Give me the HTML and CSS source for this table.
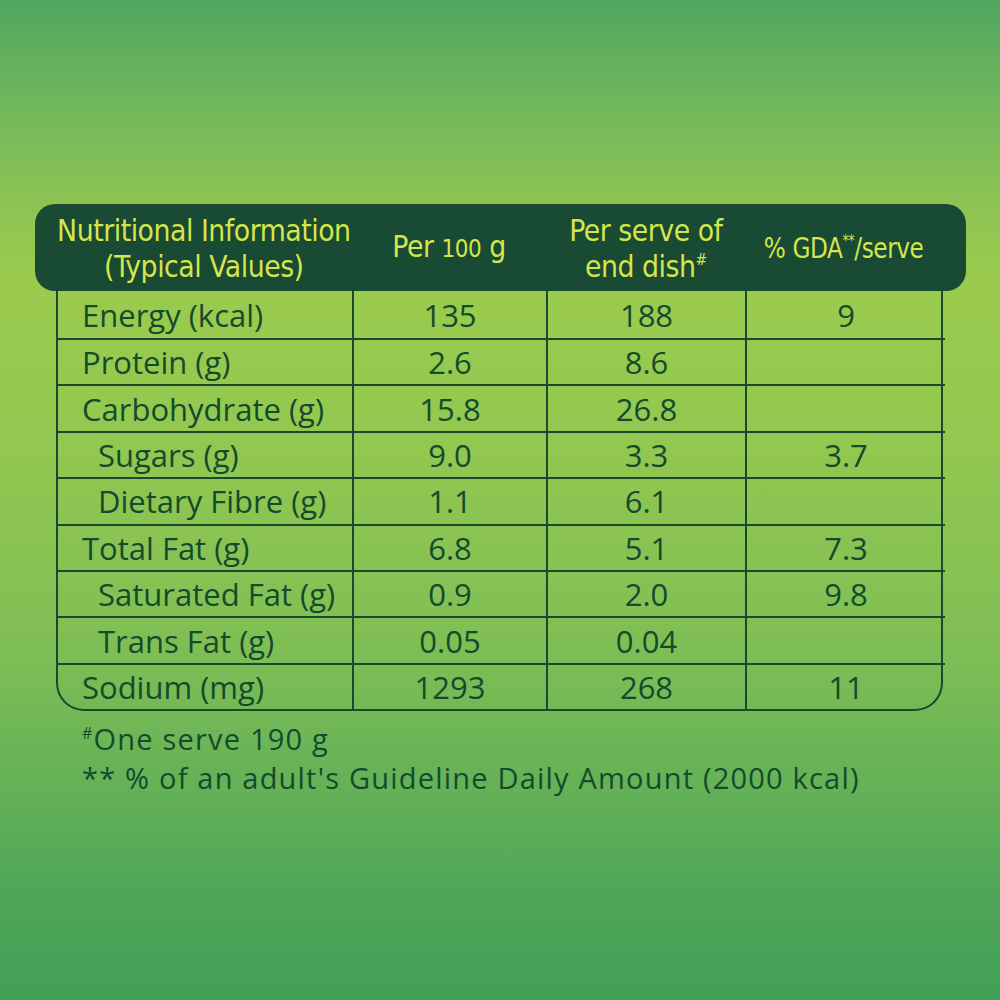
FILE: index.html
```html
<!DOCTYPE html>
<html lang="en">
<head>
<meta charset="utf-8">
<title>Nutritional Information</title>
<link rel="stylesheet" href="styles.css">
</head>
<body>
<main class="page">
  <section class="panel">
    <div class="head">
      <div class="hcell hcell-first"><span class="htext">Nutritional Information<br>(Typical Values)</span></div>
      <div class="hcell"><span class="htext">Per <span class="osf">100</span> g</span></div>
      <div class="hcell"><span class="htext">Per serve of<br>end dish<sup>#</sup></span></div>
      <div class="hcell hcell-last"><span class="htext small">% GDA<sup>**</sup>/serve</span></div>
    </div>
    <div class="body">
      <div class="cell label">Energy (kcal)</div><div class="cell">135</div><div class="cell">188</div><div class="cell">9</div>
      <div class="cell label">Protein (g)</div><div class="cell">2.6</div><div class="cell">8.6</div><div class="cell"></div>
      <div class="cell label">Carbohydrate (g)</div><div class="cell">15.8</div><div class="cell">26.8</div><div class="cell"></div>
      <div class="cell label sub">Sugars (g)</div><div class="cell">9.0</div><div class="cell">3.3</div><div class="cell">3.7</div>
      <div class="cell label sub">Dietary Fibre (g)</div><div class="cell">1.1</div><div class="cell">6.1</div><div class="cell"></div>
      <div class="cell label">Total Fat (g)</div><div class="cell">6.8</div><div class="cell">5.1</div><div class="cell">7.3</div>
      <div class="cell label sub">Saturated Fat (g)</div><div class="cell">0.9</div><div class="cell">2.0</div><div class="cell">9.8</div>
      <div class="cell label sub">Trans Fat (g)</div><div class="cell">0.05</div><div class="cell">0.04</div><div class="cell"></div>
      <div class="cell label last">Sodium (mg)</div><div class="cell last">1293</div><div class="cell last">268</div><div class="cell last">11</div>
    </div>
    <div class="notes">
      <p><sup>#</sup>One serve 190 g</p>
      <p>** % of an adult's Guideline Daily Amount (2000 kcal)</p>
    </div>
  </section>
</main>
</body>
</html>
```

FILE: styles.css
```css
html, body {
  margin: 0;
  padding: 0;
}
body {
  width: 1000px;
  height: 1000px;
  overflow: hidden;
  background: linear-gradient(to bottom,
    #52a660 0%,
    #6fb65c 10%,
    #8cc353 20%,
    #9bcb4e 28%,
    #92c750 45%,
    #7fbe55 65%,
    #62b057 80%,
    #4ea558 90%,
    #42a056 100%);
  font-family: "Open Sans", "DejaVu Sans", sans-serif;
  color: #134b2c;
}
.page {
  padding: 204px 0 0 56px;
}
.panel {
  width: 887px;
}
.head {
  display: grid;
  grid-template-columns: 317px 194px 199px 221px;
  margin: 0 -23px 0 -21px;
  height: 87px;
  background: #184a34;
  border-radius: 20px;
  color: #d4e64a;
  font-family: "DejaVu Sans Condensed", "DejaVu Sans", sans-serif;
  font-stretch: condensed;
  font-size: 31px;
  line-height: 36px;
}
.hcell {
  display: flex;
  align-items: center;
  justify-content: center;
  text-align: center;
}
.htext {
  display: inline-block;
  transform: scaleX(0.96);
  white-space: nowrap;
  letter-spacing: -0.5px;
}
.htext.small {
  font-size: 29px;
  transform: scaleX(0.89);
}
.hcell-first {
  padding-left: 21px;
}
.hcell-last {
  padding-right: 23px;
}
.htext sup {
  font-size: 16px;
  line-height: 0;
  vertical-align: 12px;
}
.osf {
  font-size: 25px;
}
.body {
  display: grid;
  grid-template-columns: 296px 194px 199px 198px;
  border: 2px solid #174a2e;
  border-top: 0;
  border-radius: 0 0 28px 28px;
}
.cell {
  height: 44.4px;
  border-bottom: 2px solid #174a2e;
  border-right: 2px solid #174a2e;
  display: flex;
  align-items: center;
  justify-content: center;
  font-size: 31px;
  white-space: nowrap;
}
.cell:nth-child(4n) {
  border-right: 0;
}
.cell:nth-child(-n+4) {
  height: 47px;
}
.cell.last {
  border-bottom: 0;
}
.label {
  justify-content: flex-start;
  padding-left: 24px;
}
.label.sub {
  padding-left: 40px;
}
.notes {
  padding: 8px 0 0 26px;
  font-size: 29px;
  line-height: 39px;
  letter-spacing: 1.2px;
  white-space: nowrap;
}
.notes p {
  margin: 0;
}
.notes sup {
  font-size: 16px;
  line-height: 0;
  vertical-align: 11px;
}
```
